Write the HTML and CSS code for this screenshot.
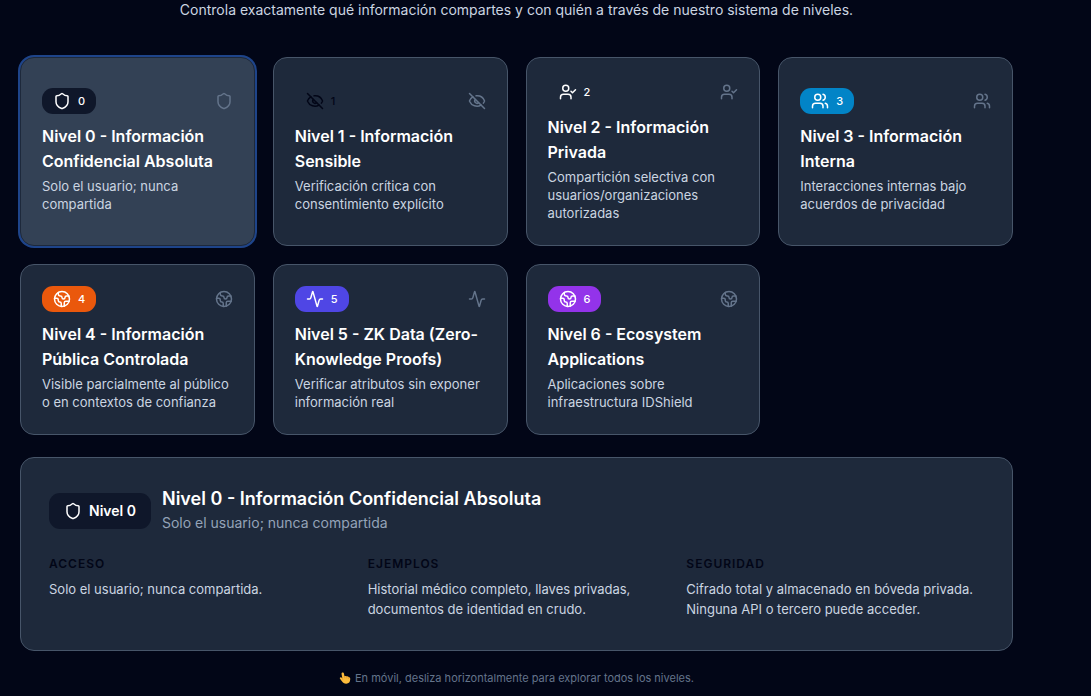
FILE: index.html
```html
<!DOCTYPE html>
<html lang="es">
<head>
<meta charset="utf-8">
<meta name="viewport" content="width=device-width, initial-scale=1">
<title>Niveles de información</title>
<link rel="stylesheet" href="styles.css">
</head>
<body>
<svg class="sprite" aria-hidden="true">
  <symbol id="shield" viewBox="0 0 24 24"><path d="M20 13c0 5-3.5 7.5-7.66 8.95a1 1 0 0 1-.67-.01C7.5 20.5 4 18 4 13V6a1 1 0 0 1 1-1c2 0 4.5-1.2 6.24-2.72a1.17 1.17 0 0 1 1.52 0C14.51 3.81 17 5 19 5a1 1 0 0 1 1 1z"/></symbol>
  <symbol id="eye-off" viewBox="0 0 24 24"><path d="M10.733 5.076a10.744 10.744 0 0 1 11.205 6.575 1 1 0 0 1 0 .696 10.747 10.747 0 0 1-1.444 2.49"/><path d="M14.084 14.158a3 3 0 0 1-4.242-4.242"/><path d="M17.479 17.499a10.75 10.75 0 0 1-15.417-5.151 1 1 0 0 1 0-.696 10.75 10.75 0 0 1 4.446-5.143"/><path d="m2 2 20 20"/></symbol>
  <symbol id="user-check" viewBox="0 0 24 24"><path d="m16 11 2 2 4-4"/><path d="M16 21v-2a4 4 0 0 0-4-4H6a4 4 0 0 0-4 4v2"/><circle cx="9" cy="7" r="4"/></symbol>
  <symbol id="users" viewBox="0 0 24 24"><path d="M16 21v-2a4 4 0 0 0-4-4H6a4 4 0 0 0-4 4v2"/><circle cx="9" cy="7" r="4"/><path d="M22 21v-2a4 4 0 0 0-3-3.87"/><path d="M16 3.13a4 4 0 0 1 0 7.75"/></symbol>
  <symbol id="earth" viewBox="0 0 24 24"><path d="M21.54 15H17a2 2 0 0 0-2 2v4.54"/><path d="M7 3.34V5a3 3 0 0 0 3 3a2 2 0 0 1 2 2c0 1.1.9 2 2 2a2 2 0 0 0 2-2c0-1.1.9-2 2-2h3.17"/><path d="M11 21.95V18a2 2 0 0 0-2-2a2 2 0 0 1-2-2v-1a2 2 0 0 0-2-2H2.05"/><circle cx="12" cy="12" r="10"/></symbol>
  <symbol id="activity" viewBox="0 0 24 24"><path d="M22 12h-2.48a2 2 0 0 0-1.93 1.46l-2.35 8.36a.25.25 0 0 1-.48 0L9.24 2.18a.25.25 0 0 0-.48 0l-2.35 8.36A2 2 0 0 1 4.49 12H2"/></symbol>
</svg>
<main class="page">
  <p class="lead">Controla exactamente qué información compartes y con quién a través de nuestro sistema de niveles.</p>

  <div class="levels">
    <button type="button" class="card card-selected" aria-pressed="true">
      <span class="card-top"><span class="badge badge-navy"><svg class="icon"><use href="#shield"/></svg>0</span><svg class="icon icon-muted"><use href="#shield"/></svg></span>
      <span class="card-title">Nivel 0 - Información Confidencial Absoluta</span>
      <span class="card-text">Solo el usuario; nunca compartida</span>
    </button>
    <button type="button" class="card" aria-pressed="false">
      <span class="card-top"><span class="badge badge-dark"><svg class="icon"><use href="#eye-off"/></svg>1</span><svg class="icon icon-muted"><use href="#eye-off"/></svg></span>
      <span class="card-title">Nivel 1 - Información Sensible</span>
      <span class="card-text">Verificación crítica con consentimiento explícito</span>
    </button>
    <button type="button" class="card" aria-pressed="false">
      <span class="card-top"><span class="badge"><svg class="icon"><use href="#user-check"/></svg>2</span><svg class="icon icon-muted"><use href="#user-check"/></svg></span>
      <span class="card-title">Nivel 2 - Información Privada</span>
      <span class="card-text">Compartición selectiva con usuarios/organizaciones autorizadas</span>
    </button>
    <button type="button" class="card" aria-pressed="false">
      <span class="card-top"><span class="badge badge-sky"><svg class="icon"><use href="#users"/></svg>3</span><svg class="icon icon-muted"><use href="#users"/></svg></span>
      <span class="card-title">Nivel 3 - Información Interna</span>
      <span class="card-text">Interacciones internas bajo acuerdos de privacidad</span>
    </button>
    <button type="button" class="card" aria-pressed="false">
      <span class="card-top"><span class="badge badge-orange"><svg class="icon"><use href="#earth"/></svg>4</span><svg class="icon icon-muted"><use href="#earth"/></svg></span>
      <span class="card-title">Nivel 4 - Información Pública Controlada</span>
      <span class="card-text">Visible parcialmente al público o en contextos de confianza</span>
    </button>
    <button type="button" class="card" aria-pressed="false">
      <span class="card-top"><span class="badge badge-indigo"><svg class="icon"><use href="#activity"/></svg>5</span><svg class="icon icon-muted"><use href="#activity"/></svg></span>
      <span class="card-title">Nivel 5 - ZK Data (Zero-Knowledge Proofs)</span>
      <span class="card-text">Verificar atributos sin exponer información real</span>
    </button>
    <button type="button" class="card" aria-pressed="false">
      <span class="card-top"><span class="badge badge-purple"><svg class="icon"><use href="#earth"/></svg>6</span><svg class="icon icon-muted"><use href="#earth"/></svg></span>
      <span class="card-title">Nivel 6 - Ecosystem Applications</span>
      <span class="card-text">Aplicaciones sobre infraestructura IDShield</span>
    </button>
  </div>

  <section class="detail">
    <header class="detail-head">
      <span class="detail-badge"><svg class="icon"><use href="#shield"/></svg>Nivel 0</span>
      <div>
        <h2 class="detail-title">Nivel 0 - Información Confidencial Absoluta</h2>
        <p class="detail-sub">Solo el usuario; nunca compartida</p>
      </div>
    </header>
    <div class="facts">
      <div><h3 class="fact-label">Acceso</h3><p class="fact-text">Solo el usuario; nunca compartida.</p></div>
      <div><h3 class="fact-label">Ejemplos</h3><p class="fact-text">Historial médico completo, llaves privadas, documentos de identidad en crudo.</p></div>
      <div><h3 class="fact-label">Seguridad</h3><p class="fact-text">Cifrado total y almacenado en bóveda privada. Ninguna API o tercero puede acceder.</p></div>
    </div>
  </section>

  <p class="hint">
    <svg class="hand" viewBox="0 0 24 24" aria-hidden="true"><path fill="#fcbc3c" d="M6.500 1.200C8.200.6 9.600 1.600 9.900 3.200l1 5.300c1.600-1 3.400-.7 4.200.4 1.500-.6 3 0 3.600 1.100 2.200-.2 3.800 1.200 3.800 3.900 0 5.600-2.700 9.400-8 9.400-4.300 0-6.700-1.900-8.700-5L2 13.600c-1.300-2.200.8-4 2.700-2.700l1.900 1.400L5.100 4.200C4.800 2.700 5.300 1.600 6.500 1.200Z"/><path fill="none" stroke="#e2932a" stroke-width="1.200" stroke-linecap="round" d="M10.900 8.500l.8 3.500M15.100 8.900l.7 3.500M18.700 10l.4 3.200M6.600 12.300l1.200 3.200"/></svg>
    <span>En móvil, desliza horizontalmente para explorar todos los niveles.</span>
  </p>
</main>
</body>
</html>
```
FILE: styles.css
```css
* { box-sizing: border-box; }

body {
  margin: 0;
  background: #020617;
  color: #cbd5e1;
  font-family: Inter, "Liberation Sans", sans-serif;
}

h2, h3, p { margin: 0; }

.sprite { display: none; }

.page { padding: 0 78px 0 20px; }

.lead {
  margin-bottom: 37px;
  font-size: 14px;
  line-height: 20px;
  text-align: center;
}

.levels {
  display: grid;
  grid-template-columns: repeat(4, minmax(0, 1fr));
  gap: 18px;
}

.card {
  display: flex;
  flex-direction: column;
  justify-content: center;
  padding: 21px 21px 23px;
  border: 1px solid #475569;
  border-radius: 14px;
  background: #1e293b;
  color: #cbd5e1;
  font-family: inherit;
  text-align: left;
  cursor: pointer;
}

.card-selected {
  border-color: #1e293b;
  background: #334155;
  box-shadow: 0 0 0 2px #1e448a;
}

.card-top {
  display: flex;
  align-items: center;
  justify-content: space-between;
  margin-bottom: 10px;
}

.icon {
  width: 18px;
  height: 18px;
  fill: none;
  stroke: currentColor;
  stroke-width: 2;
  stroke-linecap: round;
  stroke-linejoin: round;
}

.icon-muted { color: #64748b; }

.badge {
  display: flex;
  align-items: center;
  gap: 7px;
  height: 26px;
  padding: 0 11px;
  border-radius: 11px;
  color: #fff;
  font-size: 11px;
  font-weight: 500;
}

.badge-navy { background: #0f172a; }
.badge-dark { color: #020617; }
.badge-sky { background: #0284c7; }
.badge-orange { background: #ea580c; }
.badge-indigo { background: #4f46e5; }
.badge-purple { background: #9333ea; }

.card-title {
  margin-bottom: 3px;
  color: #fff;
  font-size: 16px;
  font-weight: 600;
  line-height: 25px;
}

.card-text {
  font-size: 13px;
  line-height: 18px;
}

.detail {
  margin-top: 22px;
  padding: 28px 28px 31px;
  border: 1px solid #475569;
  border-radius: 14px;
  background: #1e293b;
}

.detail-head {
  display: flex;
  align-items: center;
  gap: 11px;
  margin-bottom: 20px;
}

.detail-badge {
  display: flex;
  align-items: center;
  gap: 7px;
  height: 36px;
  padding: 0 15px;
  border-radius: 11px;
  background: #0f172a;
  color: #fff;
  font-size: 14px;
  font-weight: 600;
}

.detail-title {
  color: #fff;
  font-size: 18px;
  font-weight: 600;
  line-height: 25px;
}

.detail-sub {
  color: #94a3b8;
  font-size: 14px;
  line-height: 24px;
}

.facts {
  display: grid;
  grid-template-columns: repeat(3, minmax(0, 1fr));
  gap: 21px;
}

.fact-label {
  margin-bottom: 6px;
  color: #020617;
  font-size: 12px;
  font-weight: 600;
  letter-spacing: 1px;
  line-height: 18px;
  text-transform: uppercase;
}

.fact-text {
  font-size: 13px;
  line-height: 20px;
}

.hint {
  display: flex;
  align-items: center;
  justify-content: center;
  gap: 4px;
  padding: 18px 0 9px;
  color: #64748b;
  font-size: 11px;
  line-height: 18px;
}

.hand {
  width: 12px;
  height: 12px;
}
```
